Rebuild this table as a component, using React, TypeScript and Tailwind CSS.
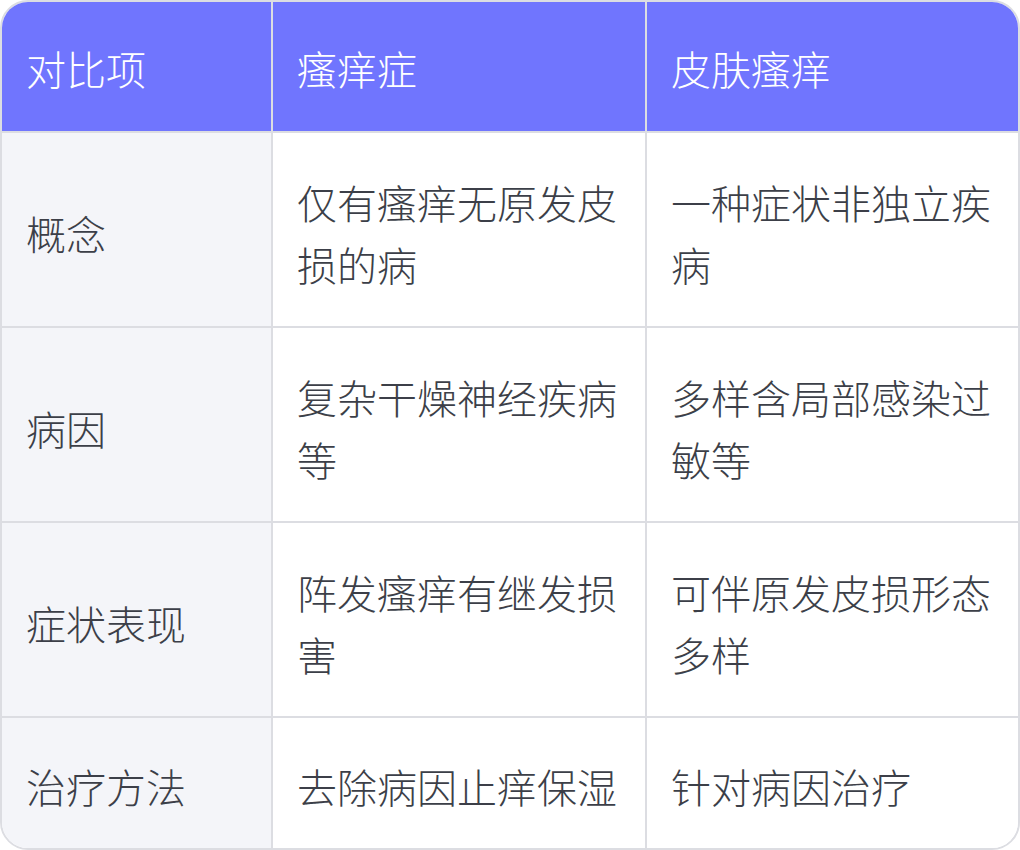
const header = ["对比项", "瘙痒症", "皮肤瘙痒"];

const rows = [
  ["概念", "仅有瘙痒无原发皮损的病", "一种症状非独立疾病"],
  ["病因", "复杂干燥神经疾病等", "多样含局部感染过敏等"],
  ["症状表现", "阵发瘙痒有继发损害", "可伴原发皮损形态多样"],
  ["治疗方法", "去除病因止痒保湿", "针对病因治疗"],
];

export default function App() {
  return (
    <div className="w-[1020px] h-[850px] bg-white font-['Noto_Sans_CJK_SC','Noto_Sans',sans-serif] font-light">
      <div className="h-full border-2 border-[#dcdde2] rounded-[28px] overflow-hidden grid grid-cols-[271px_374px_1fr] grid-rows-[131px_195px_195px_195px_1fr] text-[40px] leading-[62px]">
        {header.map((h, i) => (
          <div
            key={h}
            className={`bg-[#7075fe] text-white flex items-center px-6 pt-[2px] border-b-2 border-[#dcdde2] ${i < 2 ? "border-r-2" : ""}`}
          >
            {h}
          </div>
        ))}
        {rows.map((r, ri) =>
          r.map((c, ci) => (
            <div
              key={ri + "-" + ci}
              className={`flex items-center px-6 pt-[6px] text-[#3c3f48] border-[#dcdde2] ${ci === 0 ? "bg-[#f4f5f9]" : "bg-white"} ${ci < 2 ? "border-r-2" : ""} ${ri < 3 ? "border-b-2" : ""}`}
            >
              {c}
            </div>
          ))
        )}
      </div>
    </div>
  );
}
